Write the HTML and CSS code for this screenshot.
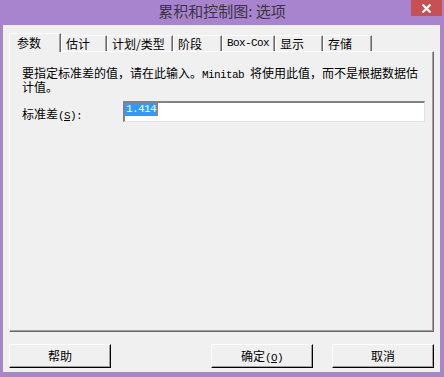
FILE: index.html
```html
<html>
<head>
    <link rel="stylesheet" href="styles.css">
</head>
<body>
    <div class="window">
        <!-- tittellinje med lukkeknapp -->
        <div class="titlebar">
            <span class="title">累积和控制图: 选项</span>
            <div class="close">
                <svg width="11" height="9" viewBox="0 0 11 9">
                    <path d="M1.5 0.5 L9.5 8.5 M9.5 0.5 L1.5 8.5" stroke="#fff" stroke-width="2.2" fill="none"/>
                </svg>
            </div>
        </div>

        <div class="client">
            <div class="tabs">
                <div class="tab selected" style="width: 52px">参数</div>
                <div class="tab" style="width: 46px">估计</div>
                <div class="tab" style="width: 66px">计划/类型</div>
                <div class="tab" style="width: 49px">阶段</div>
                <div class="tab" style="width: 53px"><span class="mono">Box-Cox</span></div>
                <div class="tab" style="width: 48px">显示</div>
                <div class="tab" style="width: 49px">存储</div>
            </div>

            <div class="panel">
                <p class="info">要指定标准差的值，请在此输入。<span class="mono">Minitab </span>将使用此值，而不是根据数据估<br>计值。</p>
                <div class="field">
                    <label class="field-label">标准差<span class="mono">(<u>S</u>):</span></label>
                    <div class="textbox"><span class="selection mono">1.414</span><span class="caret"></span></div>
                </div>
            </div>

            <div class="buttons">
                <div class="button">帮助</div>
                <div class="spacer"></div>
                <div class="button">确定<span class="mono">(<u>O</u>)</span></div>
                <div class="button">取消</div>
            </div>
        </div>
    </div>
</body>
</html>
```

FILE: styles.css
```css
html, body {
    margin: 0;
    padding: 0;
}

body {
    background-color: #a884cf;
    font-family: "Noto Sans CJK SC", sans-serif;
    font-size: 12px;
    color: #000;
}

.window {
    width: 444px;
    height: 377px;
}

.titlebar {
    height: 25px;
    position: relative;
    text-align: center;
}

.title {
    display: inline-block;
    font-size: 15px;
    line-height: 22px;
    color: #3b3340;
}

.close {
    position: absolute;
    top: 0;
    right: 2px;
    width: 31px;
    height: 16px;
    background-color: #c75050;
    display: flex;
    align-items: center;
    justify-content: center;
}

.client {
    margin: 0 3px 0 2px;
    width: 439px;
    height: 348px;
    box-sizing: border-box;
    padding: 7px 6px 0 6px;
    background-color: #f0f0f0;
    border-left: 1px solid #9d93a8;
    border-bottom: 1px solid #9d93a8;
    border-right: 1px solid #9d93a8;
    display: flex;
    flex-direction: column;
}

.mono {
    font-family: "Liberation Mono", monospace;
    font-size: 11px;
    letter-spacing: -0.6px;
}

.tabs {
    display: flex;
    align-items: flex-end;
    height: 19px;
    position: relative;
    z-index: 1;
}

.tab {
    flex-shrink: 0;
    height: 16px;
    box-sizing: border-box;
    padding-left: 4px;
    line-height: 15px;
    border-top: 1px solid #fff;
    border-left: 1px solid #fff;
    border-right: 1px solid #696969;
    box-shadow: inset -1px 0 #a0a0a0;
    background-color: #f0f0f0;
    white-space: nowrap;
}

.tab.selected {
    height: 19px;
    margin-bottom: -1px;
    padding-left: 7px;
    line-height: 17px;
}

.panel {
    height: 281px;
    box-sizing: border-box;
    padding: 15px 8px 0 12px;
    border-top: 1px solid #fff;
    border-left: 1px solid #fff;
    border-right: 1px solid #696969;
    border-bottom: 1px solid #696969;
    box-shadow: inset -1px -1px #a0a0a0;
}

.info {
    margin: 0;
    line-height: 12px;
    white-space: nowrap;
}

.field {
    display: flex;
    align-items: center;
    margin-top: 8px;
}

.field-label {
    width: 101px;
    flex-shrink: 0;
    padding-top: 3px;
}

.textbox {
    flex: 1;
    height: 21px;
    box-sizing: border-box;
    border-top: 2px solid #828282;
    border-left: 2px solid #828282;
    border-right: 1px solid #e3e3e3;
    border-bottom: 1px solid #e3e3e3;
    background-color: #fff;
    display: flex;
    align-items: flex-start;
}

.selection {
    background-color: #3399ff;
    color: #fff;
    height: 13px;
    line-height: 13px;
    padding: 0 1px;
}

.caret {
    width: 1px;
    height: 13px;
    background-color: #d9730d;
}

.buttons {
    display: flex;
    margin-top: 12px;
    gap: 19px;
}

.spacer {
    flex: 1;
}

.button {
    width: 102px;
    height: 24px;
    box-sizing: border-box;
    border-top: 1px solid #fff;
    border-left: 1px solid #fff;
    border-right: 1px solid #000;
    border-bottom: 1px solid #000;
    box-shadow: inset -1px -1px #a0a0a0;
    text-align: center;
    line-height: 22px;
}
```
